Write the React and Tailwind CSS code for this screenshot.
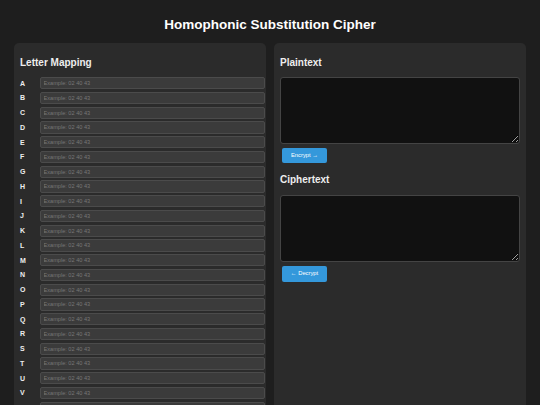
import React, { useState } from 'react'

const LETTERS = 'ABCDEFGHIJKLMNOPQRSTUVWXYZ'.split('')

const App = () => {
    const [mapping, setMapping] = useState({})
    const [plain, setPlain] = useState('')
    const [cipher, setCipher] = useState('')

    return (
        <div className="min-h-screen bg-[#1e1e1e] text-[#eeeeee] font-['Liberation_Sans',Arial,sans-serif]">
            <h1 className="pt-[17px] mb-[10px] text-center text-[13.5px] leading-[16px] font-bold text-white">
                Homophonic Substitution Cipher
            </h1>
            <div className="grid grid-cols-2 gap-[8px] px-[14px]">
                <div className="bg-[#2b2b2b] rounded-[5px] pt-[14px] pl-[6px] pr-[1px] pb-[8px]">
                    <h2 className="text-[10px] leading-[12px] font-bold mb-[8px]">Letter Mapping</h2>
                    {LETTERS.map((l) => (
                        <div key={l} className="flex items-center mb-[2.5px]">
                            <label className="w-[20px] text-[7px] font-bold leading-none">{l}</label>
                            <input
                                value={mapping[l] || ''}
                                onChange={(e) => setMapping({ ...mapping, [l]: e.target.value })}
                                placeholder="Example: 02 40 43"
                                className="flex-1 h-[12.25px] px-[2.5px] bg-[#3b3b3b] border border-[#4b4b4b] rounded-[2px] text-[5.6px] text-[#dddddd] placeholder:text-[#777777] outline-none"
                            />
                        </div>
                    ))}
                </div>
                <div className="bg-[#2b2b2b] rounded-[5px] pt-[14px] px-[6px] pb-[8px] min-h-[400px]">
                    <h2 className="text-[10px] leading-[12px] font-bold mb-[8px]">Plaintext</h2>
                    <textarea
                        value={plain}
                        onChange={(e) => setPlain(e.target.value)}
                        className="block w-full h-[67px] bg-[#111111] border border-[#444444] rounded-[3px] text-[6px] p-[3px] outline-none"
                    />
                    <button className="block mt-[3.7px] ml-[2px] w-[45px] h-[15.7px] bg-[#3498db] rounded-[2px] text-white text-[5.8px] font-normal">
                        Encrypt →
                    </button>
                    <h2 className="mt-[11px] text-[10px] leading-[12px] font-bold mb-[8.8px]">Ciphertext</h2>
                    <textarea
                        value={cipher}
                        onChange={(e) => setCipher(e.target.value)}
                        className="block w-full h-[67px] bg-[#111111] border border-[#444444] rounded-[3px] text-[6px] p-[3px] outline-none"
                    />
                    <button className="block mt-[3.7px] ml-[2px] w-[45px] h-[15.7px] bg-[#3498db] rounded-[2px] text-white text-[5.8px] font-normal">
                        ← Decrypt
                    </button>
                </div>
            </div>
        </div>
    )
}

export default App
